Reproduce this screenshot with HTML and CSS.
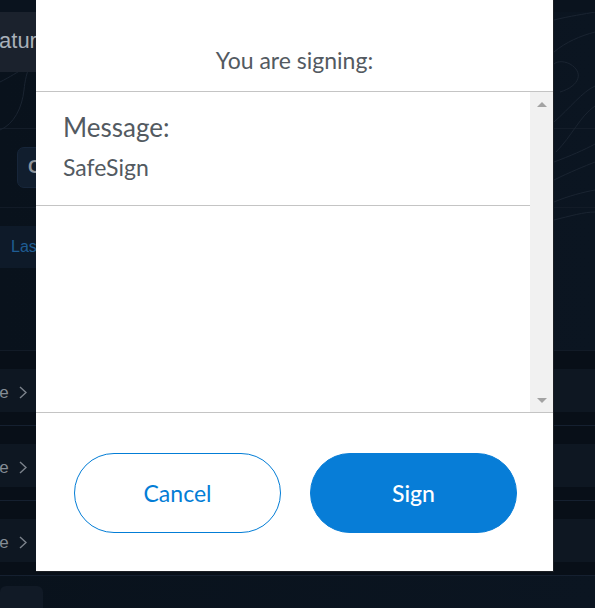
FILE: index.html
```html
<!DOCTYPE html>
<html lang="en">
<head>
<meta charset="utf-8">
<title>Signature request</title>
<link rel="stylesheet" href="styles.css">
</head>
<body>
<div class="page">
  <svg class="contours" width="595" height="608" viewBox="0 0 595 608" aria-hidden="true">
    <g fill="none" stroke="#1a2431" stroke-width="1">
      <path d="M0 70 C20 60 30 50 60 40 S120 20 160 0"/>
      <path d="M0 118 C14 112 22 96 24 78 C26 60 30 40 60 28"/>
      <path d="M554 8 C570 4 585 2 595 0"/>
      <path d="M554 40 C566 30 580 24 595 20"/>
      <path d="M560 80 C580 74 584 60 570 52 C562 48 556 50 554 52"/>
      <path d="M554 110 C570 96 582 80 595 74"/>
      <path d="M556 140 C572 124 580 104 595 94"/>
      <path d="M554 150 C570 144 584 138 595 132"/>
      <path d="M554 168 C570 160 585 154 595 150"/>
      <path d="M554 190 C568 184 584 180 595 178"/>
      <path d="M554 208 C570 204 584 200 595 200"/>
    </g>
  </svg>

  <div class="card-top"><span class="card-title">Signature</span></div>
  <div class="topo-gap"></div>
  <div class="tool-row">
    <div class="tool-btn">Copy</div>
  </div>
  <div class="tab-row">
    <div class="tab-btn">Last</div>
  </div>
  <div class="list">
    <div class="list-row"><span class="row-text">More</span><svg class="chev" width="8" height="13" viewBox="0 0 8 13"><polyline points="1,1 7,6.5 1,12" fill="none" stroke="#7c838c" stroke-width="1.4"/></svg></div>
    <div class="list-row"><span class="row-text">More</span><svg class="chev" width="8" height="13" viewBox="0 0 8 13"><polyline points="1,1 7,6.5 1,12" fill="none" stroke="#7c838c" stroke-width="1.4"/></svg></div>
    <div class="list-row"><span class="row-text">More</span><svg class="chev" width="8" height="13" viewBox="0 0 8 13"><polyline points="1,1 7,6.5 1,12" fill="none" stroke="#7c838c" stroke-width="1.4"/></svg></div>
  </div>
  <div class="bottom-chip"></div>
</div>

<div class="modal">
  <div class="modal-header">You are signing:</div>
  <div class="modal-body">
    <div class="modal-content">
      <div class="sig-item">
        <div class="sig-label">Message:</div>
        <div class="sig-value">SafeSign</div>
      </div>
    </div>
    <div class="scrollbar">
      <span class="arrow arrow-up"></span>
      <span class="arrow arrow-down"></span>
    </div>
  </div>
  <div class="modal-footer">
    <button class="btn btn-cancel">Cancel</button>
    <button class="btn btn-sign">Sign</button>
  </div>
</div>
</body>
</html>
```

FILE: styles.css
```css
* { box-sizing: border-box; }

html, body {
  margin: 0;
  padding: 0;
}

body {
  width: 595px;
  height: 608px;
  overflow: hidden;
  background: #0a131e;
  font-family: "Liberation Sans", Arial, sans-serif;
  position: relative;
}

.page {
  position: relative;
  width: 595px;
  height: 608px;
  background: linear-gradient(90deg, #09121c 0%, #0b1521 100%);
}

.contours {
  position: absolute;
  left: 0;
  top: 0;
}

.card-top {
  position: relative;
  margin-top: 12px;
  height: 60px;
  width: 200px;
  background: #1b222d;
  display: flex;
  align-items: center;
}

.card-title {
  flex-shrink: 0;
  margin-left: -45px;
  color: #a9b0b9;
  font-size: 22px;
  margin-top: -2px;
}

.topo-gap {
  height: 57px;
  border-bottom: 1px solid #141d29;
}

.tool-row {
  padding: 18px 0 19px 17px;
  border-bottom: 1px solid #121b27;
}

.tool-btn {
  width: 90px;
  height: 41px;
  border-radius: 7px;
  background: #111e2e;
  border: 1px solid #17263a;
  color: #8e949c;
  font-size: 18px;
  font-weight: bold;
  display: flex;
  align-items: center;
  padding-left: 10px;
}

.tab-row {
  padding-top: 18px;
  padding-bottom: 82px;
  border-bottom: 1px solid #121b27;
}

.tab-btn {
  width: 120px;
  height: 42px;
  background: #0e1a29;
  color: #1f5d93;
  font-size: 16px;
  display: flex;
  align-items: center;
  padding-left: 11px;
}

.list {
  display: flex;
  flex-direction: column;
}

.list-row {
  height: 75px;
  padding-top: 9px;
  border-bottom: 1px solid #152030;
  display: flex;
  align-items: center;
  gap: 10px;
  background: linear-gradient(180deg, #080f18 0px, #080f18 18px, #0e1722 18px, #0e1722 61px, #080f18 61px);
  margin-left: -30px;
  color: #858c95;
  font-size: 17px;
}

.chev {
  display: block;
}

.bottom-chip {
  margin-top: 10px;
  width: 43px;
  height: 30px;
  border-radius: 6px;
  background: #111a26;
}

/* Modal */
.modal {
  position: absolute;
  left: 36px;
  top: 0;
  width: 518px;
  height: 572px;
  background: #ffffff;
  border-right: 1px solid #1c1f24;
  border-bottom: 1px solid #1c1f24;
  display: flex;
  flex-direction: column;
  font-family: Lato, "Open Sans", sans-serif;
}

.modal-header {
  height: 92px;
  padding-top: 45px;
  line-height: 30px;
  text-align: center;
  font-size: 23px;
  color: #535a61;
  border-bottom: 1px solid #c4c4c4;
}

.modal-body {
  height: 321px;
  display: flex;
  border-bottom: 1px solid #c4c4c4;
}

.modal-content {
  flex: 1;
}

.sig-item {
  padding: 19px 27px 24px;
  border-bottom: 1px solid #c4c4c4;
}

.sig-label {
  font-size: 26px;
  line-height: 32px;
  color: #535a61;
}

.sig-value {
  margin-top: 10px;
  font-size: 23px;
  line-height: 28px;
  color: #535a61;
}

.scrollbar {
  position: relative;
  width: 23px;
  background: #f1f1f1;
}

.arrow {
  position: absolute;
  left: 7px;
  width: 0;
  height: 0;
  border-left: 5px solid transparent;
  border-right: 5px solid transparent;
}

.arrow-up {
  top: 10px;
  border-bottom: 5px solid #a3a3a3;
}

.arrow-down {
  bottom: 9px;
  border-top: 5px solid #a3a3a3;
}

.modal-footer {
  flex: 1;
  display: flex;
  gap: 29px;
  padding: 40px 36px 38px 38px;
}

.btn {
  width: 207px;
  height: 80px;
  border-radius: 40px;
  font-family: Lato, "Open Sans", sans-serif;
  font-size: 23px;
  cursor: pointer;
}

.btn-cancel {
  background: #ffffff;
  border: 1px solid #037dd6;
  color: #037dd6;
}

.btn-sign {
  background: #077dd7;
  border: 1px solid #077dd7;
  color: #ffffff;
  font-weight: 500;
}
```
